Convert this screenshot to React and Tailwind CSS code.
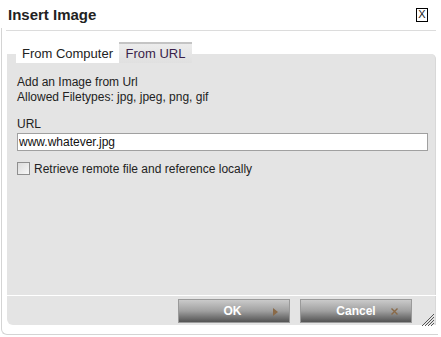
const App = () => {
  return (
    <div className="w-[441px] h-[337px] bg-white relative overflow-hidden font-['Liberation_Sans',Arial,sans-serif] text-[#222]">
      <div className="absolute left-[1px] top-[28px] right-[3px] bottom-[2px] border-l border-b border-[#d4d4d4] rounded-bl-[6px] pointer-events-none" />
      <div className="relative flex flex-col h-full pl-[7px] pr-[5px]">
        {/* header */}
        <div className="flex items-center justify-between h-[31px] pl-[2px] pr-[8px] border-b border-[#dcdcdc] -ml-[1px]">
          <span className="text-[15px] font-bold leading-none pb-[2px]">Insert Image</span>
          <span className="w-[12px] h-[14px] border border-black flex items-center justify-center text-[11px] leading-none mb-[1px]">
            X
          </span>
        </div>

        {/* tabs */}
        <div className="relative z-10 flex ml-[9px] mt-[11px] h-[21px] text-[13px] leading-none">
          <div className="bg-white w-[103px] flex items-center justify-center pt-[1px]">From Computer</div>
          <div className="w-[73px] flex items-center justify-center border-t-2 border-[#c4c4c4] bg-gradient-to-b from-[#ececec] to-[#e0e0e0] text-[#3a1f4a]">
            From URL
          </div>
        </div>

        {/* panel */}
        <div className="-mt-[9px] bg-[#e4e4e4] rounded-tr-[5px] h-[241px] border-r border-[#d8d8d8] pl-[10px] pr-[9px] pt-[21px] text-[12px] leading-[15px]">
          <div>Add an Image from Url</div>
          <div>Allowed Filetypes: jpg, jpeg, png, gif</div>
          <div className="mt-[12px]">URL</div>
          <input
            readOnly
            value="www.whatever.jpg"
            className="mt-[1px] w-[411px] h-[18px] bg-white border border-[#a0a0a0] px-[1px] text-[12px] text-[#111] outline-none"
          />
          <label className="flex items-center mt-[11px]">
            <span className="w-[13px] h-[13px] border border-[#8f8f8f] bg-gradient-to-br from-[#dcdcdc] to-[#f8f8f8] shrink-0" />
            <span className="ml-[4px] leading-none">Retrieve remote file and reference locally</span>
          </label>
        </div>

        {/* footer */}
        <div className="mt-[1px] bg-[#e4e4e4] h-[29px] rounded-bl-[6px] border-r border-[#d8d8d8] flex items-center pl-[171px] gap-[10px] relative">
          <button className="w-[112px] h-[24px] border border-[#9a9a9a] bg-gradient-to-b from-[#cacaca] via-[#a0a0a0] to-[#545454] relative flex items-center justify-center text-white font-bold text-[12px]">
            <span className="-ml-[3px]">OK</span>
            <svg className="absolute left-[94px] top-[8px]" width="5" height="8" viewBox="0 0 5 8">
              <path d="M0 0 L5 4 L0 8 Z" fill="#8a6a48" />
            </svg>
          </button>
          <button className="w-[112px] h-[24px] border border-[#9a9a9a] bg-gradient-to-b from-[#cacaca] via-[#a0a0a0] to-[#545454] relative flex items-center justify-center text-white font-bold text-[12px]">
            <span>Cancel</span>
            <svg className="absolute left-[90px] top-[8px]" width="7" height="7" viewBox="0 0 7 7">
              <path d="M0.5 0.5 L6.5 6.5 M6.5 0.5 L0.5 6.5" stroke="#8a6a48" strokeWidth="1.4" />
            </svg>
          </button>
          <svg className="absolute right-[0px] bottom-[-2px]" width="13" height="13" viewBox="0 0 13 13">
            <path d="M12 3 L3 12 M12 6 L6 12 M12 9 L9 12 M12 0 L0 12" stroke="#555" strokeWidth="1" />
          </svg>
        </div>
      </div>
    </div>
  );
};

export default App;
